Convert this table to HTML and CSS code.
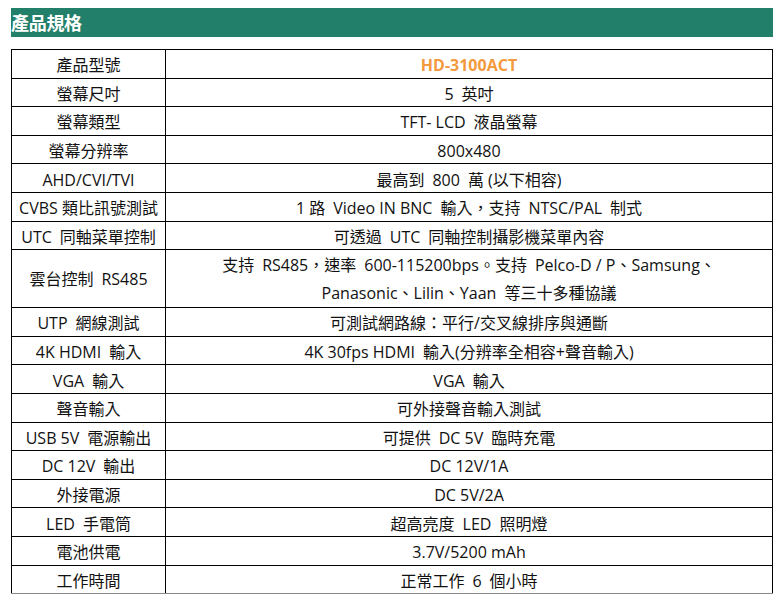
FILE: index.html
```html
<!DOCTYPE html>
<html lang="zh-Hant">
<head>
<meta charset="utf-8">
<title>產品規格</title>
<link rel="stylesheet" href="styles.css">
</head>
<body>
<div class="page">
  <div class="header">產品規格</div>
  <table class="spec">
    <tr><td class="k">產品型號</td><td class="v model">HD-3100ACT</td></tr>
    <tr><td class="k">螢幕尺吋</td><td class="v">5&ensp;英吋</td></tr>
    <tr><td class="k">螢幕類型</td><td class="v">TFT- LCD&ensp;液晶螢幕</td></tr>
    <tr><td class="k">螢幕分辨率</td><td class="v">800x480</td></tr>
    <tr><td class="k">AHD/CVI/TVI</td><td class="v">最高到&ensp;800&ensp;萬 (以下相容)</td></tr>
    <tr><td class="k">CVBS 類比訊號測試</td><td class="v">1 路&ensp;Video IN BNC&ensp;輸入，支持&ensp;NTSC/PAL&ensp;制式</td></tr>
    <tr><td class="k">UTC&ensp;同軸菜單控制</td><td class="v">可透過&ensp;UTC&ensp;同軸控制攝影機菜單內容</td></tr>
    <tr class="tall"><td class="k">雲台控制&ensp;RS485</td><td class="v">支持&ensp;RS485，速率&ensp;600-115200bps。支持&ensp;Pelco-D / P、Samsung、<br>Panasonic、Lilin、Yaan&ensp;等三十多種協議</td></tr>
    <tr><td class="k">UTP&ensp;網線測試</td><td class="v">可測試網路線：平行/交叉線排序與通斷</td></tr>
    <tr><td class="k">4K HDMI&ensp;輸入</td><td class="v">4K 30fps HDMI&ensp;輸入(分辨率全相容+聲音輸入)</td></tr>
    <tr><td class="k">VGA&ensp;輸入</td><td class="v">VGA&ensp;輸入</td></tr>
    <tr><td class="k">聲音輸入</td><td class="v">可外接聲音輸入測試</td></tr>
    <tr><td class="k">USB 5V&ensp;電源輸出</td><td class="v">可提供&ensp;DC 5V&ensp;臨時充電</td></tr>
    <tr><td class="k">DC 12V&ensp;輸出</td><td class="v">DC 12V/1A</td></tr>
    <tr><td class="k">外接電源</td><td class="v">DC 5V/2A</td></tr>
    <tr><td class="k">LED&ensp;手電筒</td><td class="v">超高亮度&ensp;LED&ensp;照明燈</td></tr>
    <tr><td class="k">電池供電</td><td class="v">3.7V/5200 mAh</td></tr>
    <tr class="last"><td class="k">工作時間</td><td class="v">正常工作&ensp;6&ensp;個小時</td></tr>
  </table>
</div>
</body>
</html>
```
FILE: styles.css
```css
html, body {
  margin: 0;
  padding: 0;
  background: #ffffff;
}
body {
  font-family: "Open Sans", "Noto Sans CJK TC", sans-serif;
  color: #111111;
}
.page {
  padding: 8px 6px 0 11px;
  width: 762px;
}
.header {
  background: #22806a;
  color: #ffffff;
  font-family: "Noto Sans CJK TC", sans-serif;
  font-weight: 700;
  font-size: 18px;
  height: 29px;
  line-height: 29px;
  letter-spacing: -0.3px;
}
.spec {
  margin-top: 12px;
  width: 762px;
  border-collapse: collapse;
  font-size: 16px;
}
.spec td {
  border: 1px solid #000000;
  height: 24.6px;
  padding: 3px 0 0 0;
  text-align: center;
  line-height: 24px;
  white-space: nowrap;
  overflow: hidden;
}
.spec td.k {
  width: 153px;
}
.spec tr.tall td {
  height: 53px;
  line-height: 28px;
  padding-top: 1px;
}
.spec tr.last td {
  border-bottom: 3px solid #8a8a8a;
}
.model {
  color: #f39a3e;
  font-weight: 700;
}
```
